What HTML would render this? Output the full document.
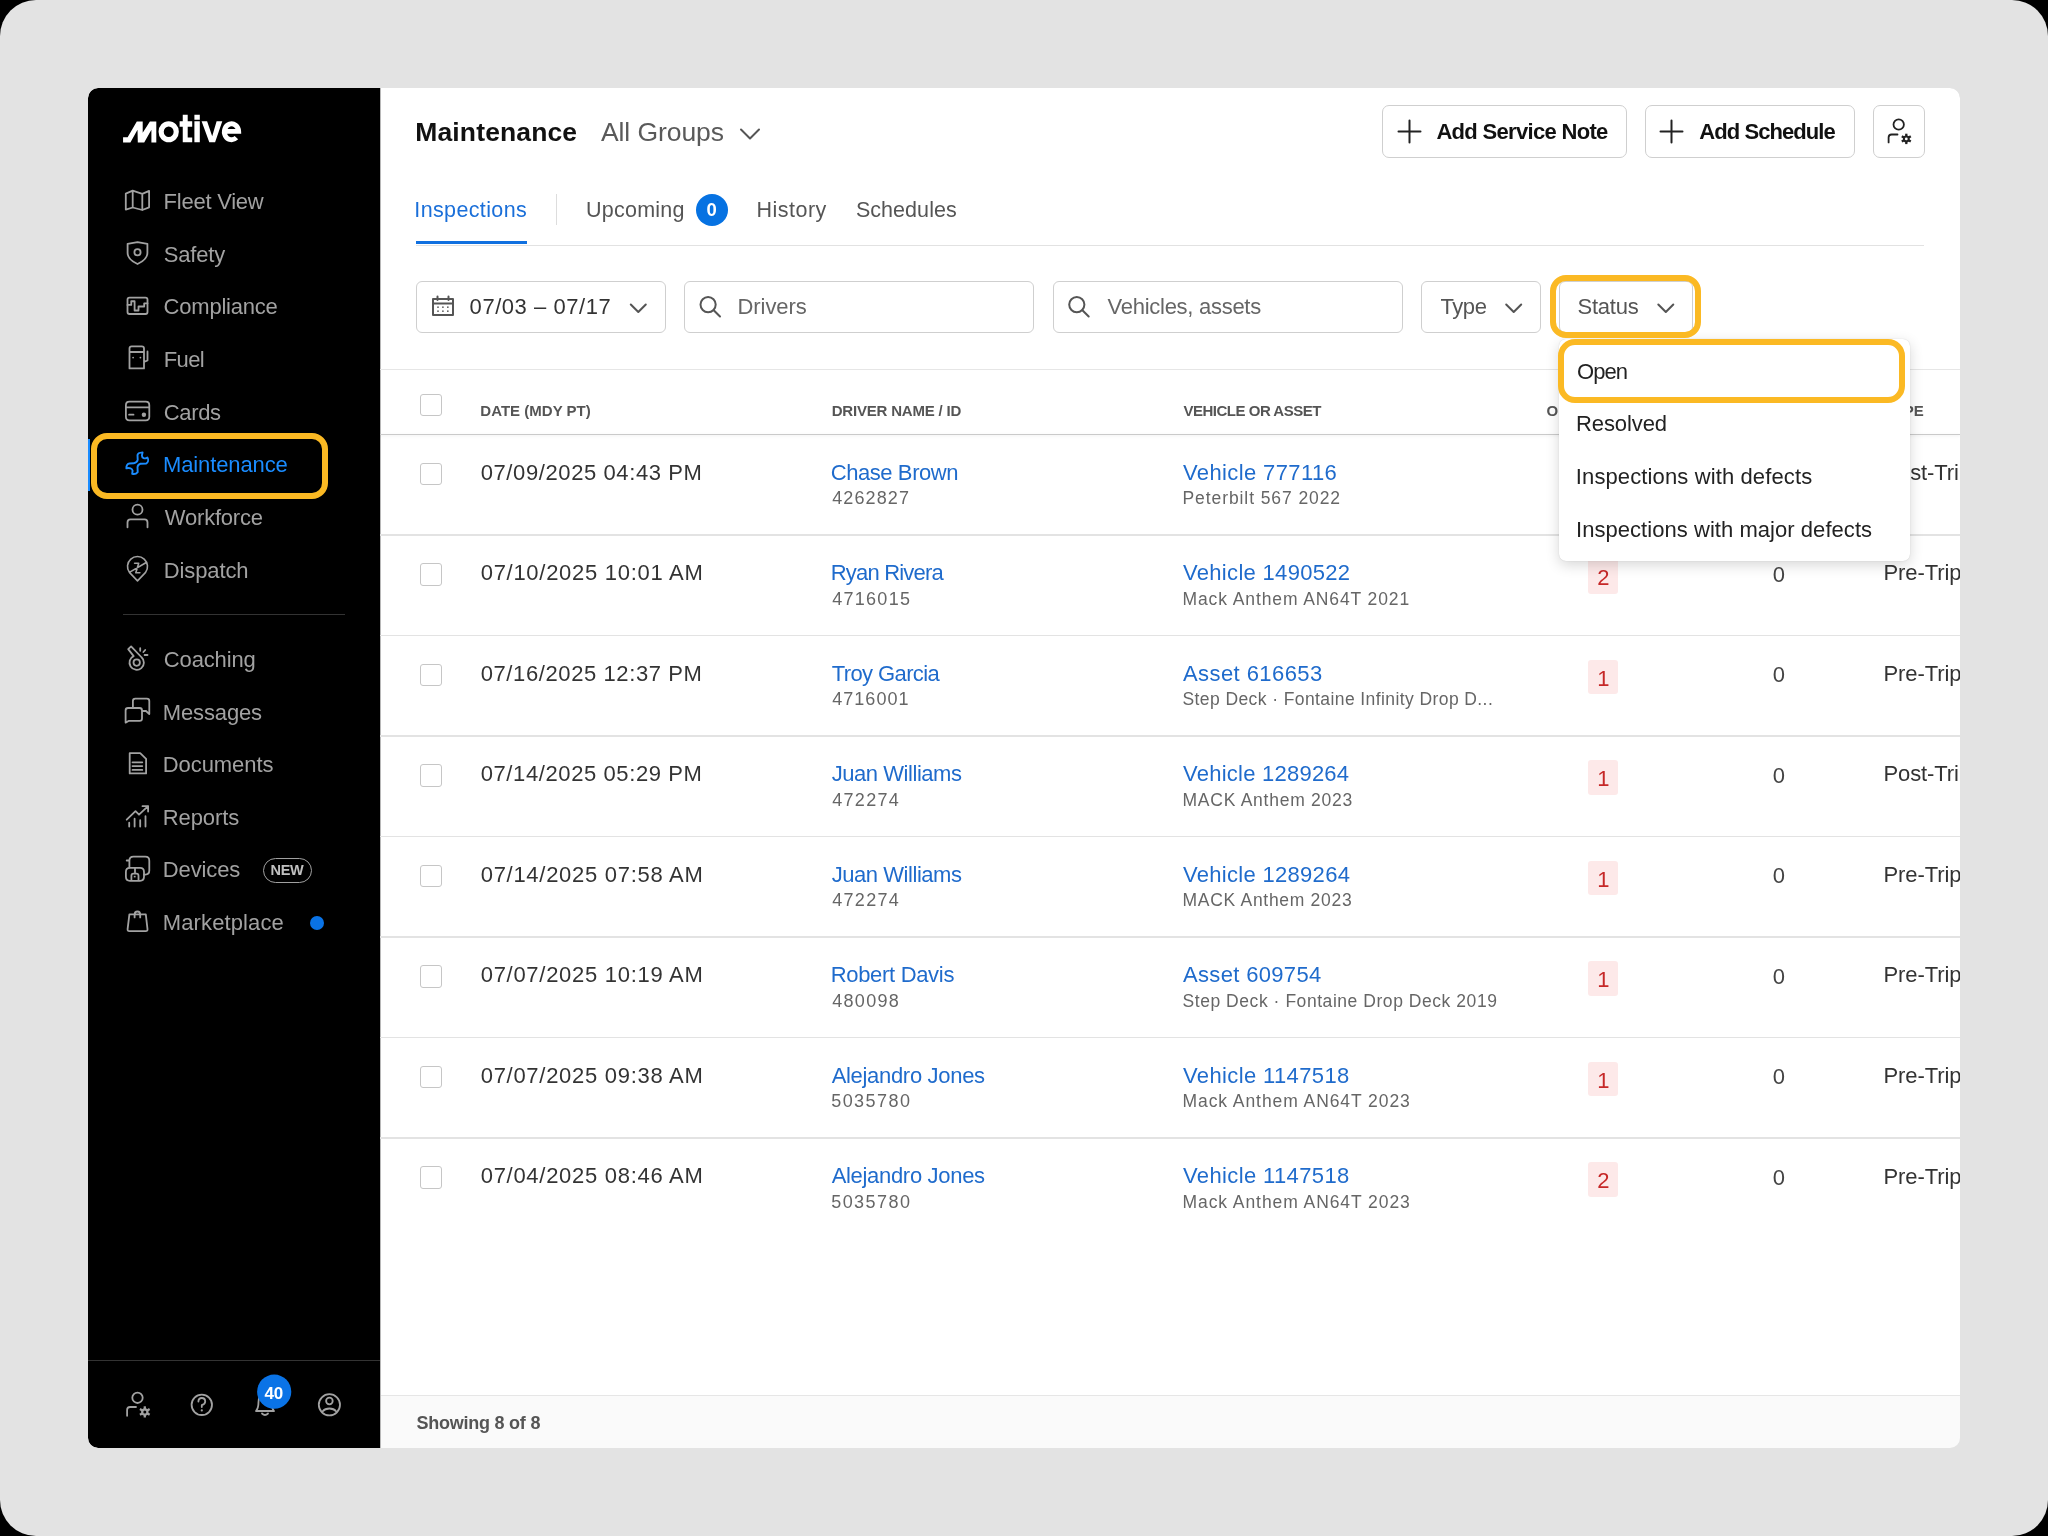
<!DOCTYPE html>
<html><head><meta charset="utf-8"><style>
html,body{margin:0;padding:0;}
body{width:2048px;height:1536px;position:relative;overflow:hidden;background:#000;font-family:'Liberation Sans',sans-serif;}
.bg{position:absolute;left:0;top:0;width:2048px;height:1536px;background:#e3e3e3;border-radius:36px;}
.t{position:absolute;white-space:nowrap;}
svg.ov{position:absolute;left:0;top:0;}
.clip{position:absolute;left:0;top:0;width:2048px;height:1536px;clip-path:inset(88px 88px 88px 88px round 10px);filter:blur(0.3px);}
</style></head><body>
<div class="bg"></div>
<div class="clip">
<div style="position:absolute;left:88px;top:88px;width:1872px;height:1360px;background:#fff;border-radius:10px;overflow:hidden"></div>
<div style="position:absolute;left:88px;top:88px;width:292px;height:1360px;background:#000;border-radius:10px 0 0 10px"></div>
<div style="position:absolute;left:380px;top:88px;width:1px;height:1360px;background:#b8b8b8"></div>
<div class="t" style="left:163.60px;top:188.00px;font-size:22px;line-height:28px;color:#a2a2a2;font-weight:400;letter-spacing:-0.243px;">Fleet View</div>
<div class="t" style="left:163.80px;top:241.00px;font-size:22px;line-height:28px;color:#a2a2a2;font-weight:400;letter-spacing:-0.2px;">Safety</div>
<div class="t" style="left:163.60px;top:293.00px;font-size:22px;line-height:28px;color:#a2a2a2;font-weight:400;letter-spacing:-0.221px;">Compliance</div>
<div class="t" style="left:163.80px;top:346.00px;font-size:22px;line-height:28px;color:#a2a2a2;font-weight:400;letter-spacing:-0.666px;">Fuel</div>
<div class="t" style="left:163.80px;top:399.00px;font-size:22px;line-height:28px;color:#a2a2a2;font-weight:400;letter-spacing:-0.35px;">Cards</div>
<div class="t" style="left:163.00px;top:451.00px;font-size:22px;line-height:28px;color:#1a8cff;font-weight:400;letter-spacing:-0.12px;">Maintenance</div>
<div class="t" style="left:164.80px;top:504.00px;font-size:22px;line-height:28px;color:#a2a2a2;font-weight:400;letter-spacing:-0.2px;">Workforce</div>
<div class="t" style="left:163.80px;top:557.00px;font-size:22px;line-height:28px;color:#a2a2a2;font-weight:400;letter-spacing:-0.114px;">Dispatch</div>
<div class="t" style="left:163.80px;top:646.00px;font-size:22px;line-height:28px;color:#a2a2a2;font-weight:400;letter-spacing:-0.142px;">Coaching</div>
<div class="t" style="left:162.80px;top:699.00px;font-size:22px;line-height:28px;color:#a2a2a2;font-weight:400;letter-spacing:-0.143px;">Messages</div>
<div class="t" style="left:162.80px;top:751.00px;font-size:22px;line-height:28px;color:#a2a2a2;font-weight:400;letter-spacing:-0.073px;">Documents</div>
<div class="t" style="left:162.80px;top:804.00px;font-size:22px;line-height:28px;color:#a2a2a2;font-weight:400;letter-spacing:-0.1px;">Reports</div>
<div class="t" style="left:162.80px;top:856.00px;font-size:22px;line-height:28px;color:#a2a2a2;font-weight:400;letter-spacing:-0.133px;">Devices</div>
<div class="t" style="left:162.80px;top:909.00px;font-size:22px;line-height:28px;color:#a2a2a2;font-weight:400;letter-spacing:0.12px;">Marketplace</div>
<div style="position:absolute;left:123px;top:614px;width:222px;height:1px;background:#333"></div>
<div style="position:absolute;left:88px;top:1360px;width:292px;height:1px;background:#333"></div>
<div style="position:absolute;left:88px;top:439px;width:2px;height:52px;background:#1a8cff"></div>
<div style="position:absolute;left:263px;top:857.5px;width:49px;height:25.5px;box-sizing:border-box;border:1.5px solid #a0a0a0;border-radius:13px"></div>
<div class="t" style="left:270.50px;top:861.00px;font-size:14.5px;line-height:18px;color:#c0c0c0;font-weight:700;letter-spacing:-0.3px;">NEW</div>
<div style="position:absolute;left:310px;top:916px;width:14px;height:14px;border-radius:50%;background:#0a73e6"></div>
<div class="t" style="left:415.30px;top:116.00px;font-size:26.5px;line-height:33px;color:#111;font-weight:700;letter-spacing:0.13px;">Maintenance</div>
<div class="t" style="left:600.90px;top:116.00px;font-size:26.5px;line-height:33px;color:#5a5a5a;font-weight:400;letter-spacing:-0.066px;">All Groups</div>
<div style="position:absolute;left:1382px;top:105px;width:245px;height:52.5px;box-sizing:border-box;border:1.5px solid #cfcfcf;border-radius:7px;background:#fff"></div>
<div style="position:absolute;left:1644.5px;top:105px;width:210px;height:52.5px;box-sizing:border-box;border:1.5px solid #cfcfcf;border-radius:7px;background:#fff"></div>
<div style="position:absolute;left:1872.5px;top:105px;width:52px;height:52.5px;box-sizing:border-box;border:1.5px solid #cfcfcf;border-radius:7px;background:#fff"></div>
<div class="t" style="left:1436.40px;top:118.00px;font-size:22px;line-height:28px;color:#111;font-weight:700;letter-spacing:-0.681px;">Add Service Note</div>
<div class="t" style="left:1699.30px;top:118.00px;font-size:22px;line-height:28px;color:#111;font-weight:700;letter-spacing:-0.939px;">Add Schedule</div>
<div class="t" style="left:414.30px;top:197.00px;font-size:21.5px;line-height:27px;color:#1a6fd9;font-weight:400;letter-spacing:0.37px;">Inspections</div>
<div style="position:absolute;left:556px;top:194px;width:1px;height:31px;background:#ddd"></div>
<div class="t" style="left:586.00px;top:197.00px;font-size:21.5px;line-height:27px;color:#555;font-weight:400;letter-spacing:0.242px;">Upcoming</div>
<div style="position:absolute;left:696px;top:194px;width:32px;height:32px;border-radius:50%;background:#0672e2"></div>
<div class="t" style="left:706.50px;top:198.00px;font-size:18.5px;line-height:23px;color:#fff;font-weight:700;letter-spacing:0px;">0</div>
<div class="t" style="left:756.60px;top:197.00px;font-size:21.5px;line-height:27px;color:#555;font-weight:400;letter-spacing:0.467px;">History</div>
<div class="t" style="left:855.90px;top:197.00px;font-size:21.5px;line-height:27px;color:#555;font-weight:400;letter-spacing:0.054px;">Schedules</div>
<div style="position:absolute;left:416px;top:244.5px;width:1508px;height:1.5px;background:#e2e2e2"></div>
<div style="position:absolute;left:415.5px;top:241px;width:111px;height:3px;background:#1070e0"></div>
<div style="position:absolute;left:416px;top:281px;width:249.5px;height:51.5px;box-sizing:border-box;border:1.5px solid #cfcfcf;border-radius:6px;background:#fff"></div>
<div style="position:absolute;left:683.5px;top:281px;width:350.5px;height:51.5px;box-sizing:border-box;border:1.5px solid #cfcfcf;border-radius:6px;background:#fff"></div>
<div style="position:absolute;left:1052.5px;top:281px;width:350.5px;height:51.5px;box-sizing:border-box;border:1.5px solid #cfcfcf;border-radius:6px;background:#fff"></div>
<div style="position:absolute;left:1421px;top:281px;width:119.5px;height:51.5px;box-sizing:border-box;border:1.5px solid #cfcfcf;border-radius:6px;background:#fff"></div>
<div style="position:absolute;left:1559px;top:281px;width:134px;height:51.5px;box-sizing:border-box;border:1.5px solid #cfcfcf;border-radius:6px;background:#fff"></div>
<div class="t" style="left:469.60px;top:293.00px;font-size:22px;line-height:28px;color:#333;font-weight:400;letter-spacing:0.549px;">07/03 – 07/17</div>
<div class="t" style="left:737.50px;top:293.00px;font-size:22px;line-height:28px;color:#666;font-weight:400;letter-spacing:-0.068px;">Drivers</div>
<div class="t" style="left:1107.60px;top:293.00px;font-size:22px;line-height:28px;color:#666;font-weight:400;letter-spacing:-0.278px;">Vehicles, assets</div>
<div class="t" style="left:1440.40px;top:293.00px;font-size:22px;line-height:28px;color:#555;font-weight:400;letter-spacing:-0.4px;">Type</div>
<div class="t" style="left:1577.50px;top:293.00px;font-size:22px;line-height:28px;color:#555;font-weight:400;letter-spacing:-0.24px;">Status</div>
<div style="position:absolute;left:380px;top:368.5px;width:1580px;height:1.5px;background:#e6e6e6"></div>
<div style="position:absolute;left:380px;top:434px;width:1580px;height:1.2px;background:#cacaca;box-shadow:0 1px 3px rgba(0,0,0,0.10)"></div>
<div style="position:absolute;left:419.5px;top:393.5px;width:22px;height:22.5px;box-sizing:border-box;border:1.5px solid #c6c6c6;border-radius:3px;background:#fff"></div>
<div class="t" style="left:480.30px;top:401.00px;font-size:15px;line-height:19px;color:#555;font-weight:700;letter-spacing:0.015px;">DATE (MDY PT)</div>
<div class="t" style="left:831.70px;top:401.00px;font-size:15px;line-height:19px;color:#555;font-weight:700;letter-spacing:-0.193px;">DRIVER NAME / ID</div>
<div class="t" style="left:1183.50px;top:401.00px;font-size:15px;line-height:19px;color:#555;font-weight:700;letter-spacing:-0.495px;">VEHICLE OR ASSET</div>
<div class="t" style="left:1546.50px;top:401.00px;font-size:15px;line-height:19px;color:#555;font-weight:700;letter-spacing:0px;">O</div>
<div class="t" style="left:1903.80px;top:401.00px;font-size:15px;line-height:19px;color:#555;font-weight:700;letter-spacing:0px;">PE</div>
<div style="position:absolute;left:380px;top:534.03px;width:1580px;height:1.5px;background:#e3e3e3"></div>
<div style="position:absolute;left:419.5px;top:462.5px;width:22px;height:22.5px;box-sizing:border-box;border:1.5px solid #c6c6c6;border-radius:3px;background:#fff"></div>
<div class="t" style="left:480.70px;top:459.00px;font-size:22px;line-height:28px;color:#333;font-weight:400;letter-spacing:0.601px;">07/09/2025 04:43 PM</div>
<div class="t" style="left:830.70px;top:459.00px;font-size:22px;line-height:28px;color:#1f6bcc;font-weight:400;letter-spacing:-0.42px;">Chase Brown</div>
<div class="t" style="left:832.20px;top:487.00px;font-size:18px;line-height:22px;color:#666;font-weight:400;letter-spacing:1.111px;">4262827</div>
<div class="t" style="left:1183.00px;top:459.00px;font-size:22px;line-height:28px;color:#1f6bcc;font-weight:400;letter-spacing:0.38px;">Vehicle 777116</div>
<div class="t" style="left:1182.50px;top:487.00px;font-size:17.5px;line-height:22px;color:#666;font-weight:400;letter-spacing:0.913px;">Peterbilt 567 2022</div>
<div style="position:absolute;left:1588.3px;top:458.50px;width:30px;height:34.5px;border-radius:3px;background:#fde9e9"></div>
<div class="t" style="left:1597.30px;top:463.00px;font-size:22px;line-height:28px;color:#c62828;font-weight:400;letter-spacing:0px;">1</div>
<div class="t" style="left:1772.80px;top:460.00px;font-size:22px;line-height:28px;color:#444;font-weight:400;letter-spacing:0px;">0</div>
<div class="t" style="left:1883.50px;top:459.00px;font-size:22px;line-height:28px;color:#333;font-weight:400;letter-spacing:-0.1px;">Post-Trip</div>
<div style="position:absolute;left:380px;top:634.56px;width:1580px;height:1.5px;background:#e3e3e3"></div>
<div style="position:absolute;left:419.5px;top:563.03px;width:22px;height:22.5px;box-sizing:border-box;border:1.5px solid #c6c6c6;border-radius:3px;background:#fff"></div>
<div class="t" style="left:480.70px;top:559.00px;font-size:22px;line-height:28px;color:#333;font-weight:400;letter-spacing:0.714px;">07/10/2025 10:01 AM</div>
<div class="t" style="left:830.70px;top:559.00px;font-size:22px;line-height:28px;color:#1f6bcc;font-weight:400;letter-spacing:-0.8px;">Ryan Rivera</div>
<div class="t" style="left:832.20px;top:588.00px;font-size:18px;line-height:22px;color:#666;font-weight:400;letter-spacing:1.278px;">4716015</div>
<div class="t" style="left:1183.00px;top:559.00px;font-size:22px;line-height:28px;color:#1f6bcc;font-weight:400;letter-spacing:0.312px;">Vehicle 1490522</div>
<div class="t" style="left:1182.50px;top:588.00px;font-size:17.5px;line-height:22px;color:#666;font-weight:400;letter-spacing:0.898px;">Mack Anthem AN64T 2021</div>
<div style="position:absolute;left:1588.3px;top:559.03px;width:30px;height:34.5px;border-radius:3px;background:#fde9e9"></div>
<div class="t" style="left:1597.30px;top:564.00px;font-size:22px;line-height:28px;color:#c62828;font-weight:400;letter-spacing:0px;">2</div>
<div class="t" style="left:1772.80px;top:561.00px;font-size:22px;line-height:28px;color:#444;font-weight:400;letter-spacing:0px;">0</div>
<div class="t" style="left:1883.50px;top:559.00px;font-size:22px;line-height:28px;color:#333;font-weight:400;letter-spacing:-0.1px;">Pre-Trip</div>
<div style="position:absolute;left:380px;top:735.09px;width:1580px;height:1.5px;background:#e3e3e3"></div>
<div style="position:absolute;left:419.5px;top:663.56px;width:22px;height:22.5px;box-sizing:border-box;border:1.5px solid #c6c6c6;border-radius:3px;background:#fff"></div>
<div class="t" style="left:480.70px;top:660.00px;font-size:22px;line-height:28px;color:#333;font-weight:400;letter-spacing:0.601px;">07/16/2025 12:37 PM</div>
<div class="t" style="left:831.70px;top:660.00px;font-size:22px;line-height:28px;color:#1f6bcc;font-weight:400;letter-spacing:-0.6px;">Troy Garcia</div>
<div class="t" style="left:832.20px;top:688.00px;font-size:18px;line-height:22px;color:#666;font-weight:400;letter-spacing:1.045px;">4716001</div>
<div class="t" style="left:1183.00px;top:660.00px;font-size:22px;line-height:28px;color:#1f6bcc;font-weight:400;letter-spacing:0.425px;">Asset 616653</div>
<div class="t" style="left:1182.50px;top:688.00px;font-size:17.5px;line-height:22px;color:#666;font-weight:400;letter-spacing:0.409px;">Step Deck · Fontaine Infinity Drop D...</div>
<div style="position:absolute;left:1588.3px;top:659.56px;width:30px;height:34.5px;border-radius:3px;background:#fde9e9"></div>
<div class="t" style="left:1597.30px;top:665.00px;font-size:22px;line-height:28px;color:#c62828;font-weight:400;letter-spacing:0px;">1</div>
<div class="t" style="left:1772.80px;top:661.00px;font-size:22px;line-height:28px;color:#444;font-weight:400;letter-spacing:0px;">0</div>
<div class="t" style="left:1883.50px;top:660.00px;font-size:22px;line-height:28px;color:#333;font-weight:400;letter-spacing:-0.1px;">Pre-Trip</div>
<div style="position:absolute;left:380px;top:835.62px;width:1580px;height:1.5px;background:#e3e3e3"></div>
<div style="position:absolute;left:419.5px;top:764.09px;width:22px;height:22.5px;box-sizing:border-box;border:1.5px solid #c6c6c6;border-radius:3px;background:#fff"></div>
<div class="t" style="left:480.70px;top:760.00px;font-size:22px;line-height:28px;color:#333;font-weight:400;letter-spacing:0.601px;">07/14/2025 05:29 PM</div>
<div class="t" style="left:831.70px;top:760.00px;font-size:22px;line-height:28px;color:#1f6bcc;font-weight:400;letter-spacing:-0.449px;">Juan Williams</div>
<div class="t" style="left:832.20px;top:789.00px;font-size:18px;line-height:22px;color:#666;font-weight:400;letter-spacing:1.32px;">472274</div>
<div class="t" style="left:1183.00px;top:760.00px;font-size:22px;line-height:28px;color:#1f6bcc;font-weight:400;letter-spacing:0.241px;">Vehicle 1289264</div>
<div class="t" style="left:1182.50px;top:789.00px;font-size:17.5px;line-height:22px;color:#666;font-weight:400;letter-spacing:0.747px;">MACK Anthem 2023</div>
<div style="position:absolute;left:1588.3px;top:760.09px;width:30px;height:34.5px;border-radius:3px;background:#fde9e9"></div>
<div class="t" style="left:1597.30px;top:765.00px;font-size:22px;line-height:28px;color:#c62828;font-weight:400;letter-spacing:0px;">1</div>
<div class="t" style="left:1772.80px;top:762.00px;font-size:22px;line-height:28px;color:#444;font-weight:400;letter-spacing:0px;">0</div>
<div class="t" style="left:1883.50px;top:760.00px;font-size:22px;line-height:28px;color:#333;font-weight:400;letter-spacing:-0.1px;">Post-Trip</div>
<div style="position:absolute;left:380px;top:936.15px;width:1580px;height:1.5px;background:#e3e3e3"></div>
<div style="position:absolute;left:419.5px;top:864.62px;width:22px;height:22.5px;box-sizing:border-box;border:1.5px solid #c6c6c6;border-radius:3px;background:#fff"></div>
<div class="t" style="left:480.70px;top:861.00px;font-size:22px;line-height:28px;color:#333;font-weight:400;letter-spacing:0.714px;">07/14/2025 07:58 AM</div>
<div class="t" style="left:831.70px;top:861.00px;font-size:22px;line-height:28px;color:#1f6bcc;font-weight:400;letter-spacing:-0.449px;">Juan Williams</div>
<div class="t" style="left:832.20px;top:889.00px;font-size:18px;line-height:22px;color:#666;font-weight:400;letter-spacing:1.32px;">472274</div>
<div class="t" style="left:1183.00px;top:861.00px;font-size:22px;line-height:28px;color:#1f6bcc;font-weight:400;letter-spacing:0.302px;">Vehicle 1289264</div>
<div class="t" style="left:1182.50px;top:889.00px;font-size:17.5px;line-height:22px;color:#666;font-weight:400;letter-spacing:0.708px;">MACK Anthem 2023</div>
<div style="position:absolute;left:1588.3px;top:860.62px;width:30px;height:34.5px;border-radius:3px;background:#fde9e9"></div>
<div class="t" style="left:1597.30px;top:866.00px;font-size:22px;line-height:28px;color:#c62828;font-weight:400;letter-spacing:0px;">1</div>
<div class="t" style="left:1772.80px;top:862.00px;font-size:22px;line-height:28px;color:#444;font-weight:400;letter-spacing:0px;">0</div>
<div class="t" style="left:1883.50px;top:861.00px;font-size:22px;line-height:28px;color:#333;font-weight:400;letter-spacing:-0.1px;">Pre-Trip</div>
<div style="position:absolute;left:380px;top:1036.68px;width:1580px;height:1.5px;background:#e3e3e3"></div>
<div style="position:absolute;left:419.5px;top:965.15px;width:22px;height:22.5px;box-sizing:border-box;border:1.5px solid #c6c6c6;border-radius:3px;background:#fff"></div>
<div class="t" style="left:480.70px;top:961.00px;font-size:22px;line-height:28px;color:#333;font-weight:400;letter-spacing:0.714px;">07/07/2025 10:19 AM</div>
<div class="t" style="left:830.70px;top:961.00px;font-size:22px;line-height:28px;color:#1f6bcc;font-weight:400;letter-spacing:-0.315px;">Robert Davis</div>
<div class="t" style="left:832.20px;top:990.00px;font-size:18px;line-height:22px;color:#666;font-weight:400;letter-spacing:1.32px;">480098</div>
<div class="t" style="left:1183.00px;top:961.00px;font-size:22px;line-height:28px;color:#1f6bcc;font-weight:400;letter-spacing:0.337px;">Asset 609754</div>
<div class="t" style="left:1182.50px;top:990.00px;font-size:17.5px;line-height:22px;color:#666;font-weight:400;letter-spacing:0.55px;">Step Deck · Fontaine Drop Deck 2019</div>
<div style="position:absolute;left:1588.3px;top:961.15px;width:30px;height:34.5px;border-radius:3px;background:#fde9e9"></div>
<div class="t" style="left:1597.30px;top:966.00px;font-size:22px;line-height:28px;color:#c62828;font-weight:400;letter-spacing:0px;">1</div>
<div class="t" style="left:1772.80px;top:963.00px;font-size:22px;line-height:28px;color:#444;font-weight:400;letter-spacing:0px;">0</div>
<div class="t" style="left:1883.50px;top:961.00px;font-size:22px;line-height:28px;color:#333;font-weight:400;letter-spacing:-0.1px;">Pre-Trip</div>
<div style="position:absolute;left:380px;top:1137.21px;width:1580px;height:1.5px;background:#e3e3e3"></div>
<div style="position:absolute;left:419.5px;top:1065.68px;width:22px;height:22.5px;box-sizing:border-box;border:1.5px solid #c6c6c6;border-radius:3px;background:#fff"></div>
<div class="t" style="left:480.70px;top:1062.00px;font-size:22px;line-height:28px;color:#333;font-weight:400;letter-spacing:0.714px;">07/07/2025 09:38 AM</div>
<div class="t" style="left:831.70px;top:1062.00px;font-size:22px;line-height:28px;color:#1f6bcc;font-weight:400;letter-spacing:-0.315px;">Alejandro Jones</div>
<div class="t" style="left:831.20px;top:1090.00px;font-size:18px;line-height:22px;color:#666;font-weight:400;letter-spacing:1.445px;">5035780</div>
<div class="t" style="left:1183.00px;top:1062.00px;font-size:22px;line-height:28px;color:#1f6bcc;font-weight:400;letter-spacing:0.373px;">Vehicle 1147518</div>
<div class="t" style="left:1182.50px;top:1090.00px;font-size:17.5px;line-height:22px;color:#666;font-weight:400;letter-spacing:0.927px;">Mack Anthem AN64T 2023</div>
<div style="position:absolute;left:1588.3px;top:1061.68px;width:30px;height:34.5px;border-radius:3px;background:#fde9e9"></div>
<div class="t" style="left:1597.30px;top:1067.00px;font-size:22px;line-height:28px;color:#c62828;font-weight:400;letter-spacing:0px;">1</div>
<div class="t" style="left:1772.80px;top:1063.00px;font-size:22px;line-height:28px;color:#444;font-weight:400;letter-spacing:0px;">0</div>
<div class="t" style="left:1883.50px;top:1062.00px;font-size:22px;line-height:28px;color:#333;font-weight:400;letter-spacing:-0.1px;">Pre-Trip</div>
<div style="position:absolute;left:419.5px;top:1166.21px;width:22px;height:22.5px;box-sizing:border-box;border:1.5px solid #c6c6c6;border-radius:3px;background:#fff"></div>
<div class="t" style="left:480.70px;top:1162.00px;font-size:22px;line-height:28px;color:#333;font-weight:400;letter-spacing:0.714px;">07/04/2025 08:46 AM</div>
<div class="t" style="left:831.70px;top:1162.00px;font-size:22px;line-height:28px;color:#1f6bcc;font-weight:400;letter-spacing:-0.315px;">Alejandro Jones</div>
<div class="t" style="left:831.20px;top:1191.00px;font-size:18px;line-height:22px;color:#666;font-weight:400;letter-spacing:1.445px;">5035780</div>
<div class="t" style="left:1183.00px;top:1162.00px;font-size:22px;line-height:28px;color:#1f6bcc;font-weight:400;letter-spacing:0.373px;">Vehicle 1147518</div>
<div class="t" style="left:1182.50px;top:1191.00px;font-size:17.5px;line-height:22px;color:#666;font-weight:400;letter-spacing:0.927px;">Mack Anthem AN64T 2023</div>
<div style="position:absolute;left:1588.3px;top:1162.21px;width:30px;height:34.5px;border-radius:3px;background:#fde9e9"></div>
<div class="t" style="left:1597.30px;top:1167.00px;font-size:22px;line-height:28px;color:#c62828;font-weight:400;letter-spacing:0px;">2</div>
<div class="t" style="left:1772.80px;top:1164.00px;font-size:22px;line-height:28px;color:#444;font-weight:400;letter-spacing:0px;">0</div>
<div class="t" style="left:1883.50px;top:1163.00px;font-size:22px;line-height:28px;color:#333;font-weight:400;letter-spacing:-0.1px;">Pre-Trip</div>
<div style="position:absolute;left:381px;top:1395px;width:1579px;height:53px;background:#fafafa"></div>
<div style="position:absolute;left:381px;top:1394.5px;width:1579px;height:1.5px;background:#e6e6e6"></div>
<div class="t" style="left:416.40px;top:1412.00px;font-size:18px;line-height:22px;color:#555;font-weight:700;letter-spacing:-0.23px;">Showing 8 of 8</div>
<div style="position:absolute;left:1559px;top:338.5px;width:351px;height:222.5px;border-radius:7px;background:#fff;box-shadow:0 4px 14px rgba(0,0,0,0.16),0 0 1px rgba(0,0,0,0.2)"></div>
<div class="t" style="left:1577.00px;top:358.00px;font-size:22px;line-height:28px;color:#222;font-weight:400;letter-spacing:-0.933px;">Open</div>
<div class="t" style="left:1576.00px;top:410.00px;font-size:22px;line-height:28px;color:#222;font-weight:400;letter-spacing:-0.1px;">Resolved</div>
<div class="t" style="left:1575.80px;top:463.00px;font-size:22px;line-height:28px;color:#222;font-weight:400;letter-spacing:0.121px;">Inspections with defects</div>
<div class="t" style="left:1576.00px;top:516.00px;font-size:22px;line-height:28px;color:#222;font-weight:400;letter-spacing:0.047px;">Inspections with major defects</div>
<div style="position:absolute;left:90.5px;top:433px;width:237.5px;height:65.5px;box-sizing:border-box;border:6px solid #fbb923;border-radius:16px"></div>
<div style="position:absolute;left:1549.5px;top:275.3px;width:151px;height:63px;box-sizing:border-box;border:6px solid #fbb923;border-radius:16px"></div>
<div style="position:absolute;left:1558px;top:339.3px;width:347px;height:64px;box-sizing:border-box;border:6px solid #fbb923;border-radius:17px"></div>
<svg class="ov" width="2048" height="1536" viewBox="0 0 2048 1536">
<path d="M123.07 142.40 L123.07 137.20 L127.65 137.20 L136.80 121.40 L142.70 121.40 L142.70 132.80 L149.90 121.40 L156.30 121.40 L156.30 142.40 L151.40 142.40 L151.40 129.80 L144.20 142.40 L137.80 142.40 L137.50 129.80 L130.40 142.40 Z" fill="#fff"/>
<path d="M182.75 114.7 H187.7 V121.2 H192.2 V126.8 H187.7 V137.4 H192.2 V142.3 H182.75 V126.8 H179.6 V121.2 H182.75 Z" fill="#fff"/>
<path d="M194.4 121.2 H199.8 V142.3 H194.4 Z M194.4 114.7 H199.8 V119.7 H194.4 Z" fill="#fff"/>
<path d="M201.6 121.2 H207.1 L212.2 136.2 L216.6 121.2 H222.3 L215.1 142.3 H209.3 Z" fill="#fff"/>
<ellipse cx="168.7" cy="131.75" rx="7.55" ry="7.95" fill="none" stroke="#fff" stroke-width="5.2"/>
<path d="M224.4 131.35 H238.65 A7.15 7.95 0 1 0 236.4 137.6" fill="none" stroke="#fff" stroke-width="4.9"/>
<path d="M741 129.5 L750 138.5 L759 129.5" fill="none" stroke="#555" stroke-width="2" stroke-linecap="round" stroke-linejoin="round" />
<path d="M1409.5 120.5 V142.5 M1398.5 131.5 H1420.5" fill="none" stroke="#222" stroke-width="2" stroke-linecap="round" stroke-linejoin="round" stroke-linecap="butt"/>
<path d="M1671.5 120.5 V142.5 M1660.5 131.5 H1682.5" fill="none" stroke="#222" stroke-width="2" stroke-linecap="round" stroke-linejoin="round" />
<path d="M630.8 304.5 L638.3 312 L645.8 304.5" fill="none" stroke="#555" stroke-width="2" stroke-linecap="round" stroke-linejoin="round" />
<path d="M1506.2 304.5 L1513.7 312 L1521.2 304.5" fill="none" stroke="#555" stroke-width="2" stroke-linecap="round" stroke-linejoin="round" />
<path d="M1658.3 304.5 L1665.8 312 L1673.3 304.5" fill="none" stroke="#555" stroke-width="2" stroke-linecap="round" stroke-linejoin="round" />
<circle cx="708.1" cy="304.6" r="7.6" fill="none" stroke="#555" stroke-width="2"/>
<path d="M713.7 310.2 L720.0 316.5" fill="none" stroke="#555" stroke-width="2" stroke-linecap="round" stroke-linejoin="round" />
<circle cx="1076.8" cy="304.6" r="7.6" fill="none" stroke="#555" stroke-width="2"/>
<path d="M1082.4 310.2 L1088.7 316.5" fill="none" stroke="#555" stroke-width="2" stroke-linecap="round" stroke-linejoin="round" />
<path d="M433 299 H453 V315 H433 Z M433 303.5 H453 M437.5 296.5 V300 M448.5 296.5 V300" fill="none" stroke="#555" stroke-width="2" stroke-linecap="round" stroke-linejoin="round" stroke-linecap="butt" stroke-linejoin="miter"/>
<rect x="437.2" y="306.4" width="1.6" height="1.6" fill="#666"/>
<rect x="442.09999999999997" y="306.4" width="1.6" height="1.6" fill="#666"/>
<rect x="447.0" y="306.4" width="1.6" height="1.6" fill="#666"/>
<rect x="437.2" y="310.4" width="1.6" height="1.6" fill="#666"/>
<rect x="442.09999999999997" y="310.4" width="1.6" height="1.6" fill="#666"/>
<rect x="447.0" y="310.4" width="1.6" height="1.6" fill="#666"/>
<path d="M125.8 193.6 L132.7 190.7 L142.3 193.8 L149.1 190.9 L149.1 207.3 L142.3 210 L132.7 207.5 L125.8 209.6 Z M132.7 190.7 V207.5 M142.3 193.8 V210" fill="none" stroke="#a2a2a2" stroke-width="1.8" stroke-linecap="round" stroke-linejoin="round" />
<path d="M137.5 242.2 L127.6 243.8 V253 C127.6 258 132 261.5 137.5 264 C143 261.5 147.4 258 147.4 253 V243.8 Z" fill="none" stroke="#a2a2a2" stroke-width="1.8" stroke-linecap="round" stroke-linejoin="round" />
<circle cx="137.5" cy="252.3" r="3.1" fill="none" stroke="#a2a2a2" stroke-width="1.8"/>
<path d="M129.5 297.6 H145.5 Q147.5 297.6 147.5 299.6 V312 Q147.5 314 145.5 314 H129.5 Q127.5 314 127.5 312 V299.6 Q127.5 297.6 129.5 297.6 Z" fill="none" stroke="#a2a2a2" stroke-width="1.8" stroke-linecap="round" stroke-linejoin="round" />
<path d="M127.5 304.9 H131.25 V301.25 H134.6 V310.5 H138.5 V306.5 H144.2 V303.3 H147.5" fill="none" stroke="#a2a2a2" stroke-width="1.8" stroke-linecap="round" stroke-linejoin="round" stroke-linejoin="miter"/>
<path d="M129.5 368.4 V348.6 Q129.5 346.4 131.7 346.4 H141.8 Q144 346.4 144 348.6 V368.4 Z M129.5 352 H144 M144 361.8 L147.5 360.5 V351.5" fill="none" stroke="#a2a2a2" stroke-width="1.8" stroke-linecap="round" stroke-linejoin="round" />
<circle cx="133.1" cy="357.6" r="0.9" fill="#a2a2a2"/><circle cx="140.4" cy="357.6" r="0.9" fill="#a2a2a2"/>
<path d="M129.4 401.7 H145.8 Q149.3 401.7 149.3 405.2 V416.8 Q149.3 420.3 145.8 420.3 H129.4 Q125.9 420.3 125.9 416.8 V405.2 Q125.9 401.7 129.4 401.7 Z M125.9 407.3 H149.3 M129.1 414.7 H133.5" fill="none" stroke="#a2a2a2" stroke-width="1.8" stroke-linecap="round" stroke-linejoin="round" />
<circle cx="143.9" cy="414.8" r="2.2" fill="#a2a2a2"/>
<path d="M137.5 455.1 C137.6 453.8 139.8 452.6 142.6 452.4 L141.9 455.6 C141.9 457.8 144.5 459.4 147.4 457.6 C148.8 459.8 148 462.4 146.3 463.5 L140.6 463.7 C138.6 464.5 137.5 465.8 137.5 467.3 L137.7 472.1 C136.6 473.5 134.6 474.3 132.2 473.8 L132.6 470.6 C132.2 468.5 129.6 467.4 126.4 468.4 C126.2 465.6 127.4 463.6 129.5 463.5 L133.7 463.3 C136.2 462.6 137.6 461.2 137.7 459.7 Z" fill="none" stroke="#1a8cff" stroke-width="1.9" stroke-linecap="round" stroke-linejoin="round" />
<circle cx="137.5" cy="509.7" r="5" fill="none" stroke="#a2a2a2" stroke-width="1.8"/>
<path d="M127.5 527.3 V522.4 Q127.5 519.4 130.5 519.4 H144.5 Q147.5 519.4 147.5 522.4 V527.3" fill="none" stroke="#a2a2a2" stroke-width="1.8" stroke-linecap="round" stroke-linejoin="round" />
<path d="M129.4 572.4 A10 10 0 1 1 145.6 572.4 L137.5 580.9 Z M129.4 572.4 L145.8 562.7 M134.6 563.3 H138.7 L135.8 572.7 H139.9" fill="none" stroke="#a2a2a2" stroke-width="1.6" stroke-linecap="round" stroke-linejoin="round" />
<path d="M133.66 656.07 L128.2 649.1 L131.1 646.4 L141.5 657.25 A7.2 7.2 0 1 1 133.66 656.07 Z" fill="none" stroke="#a2a2a2" stroke-width="1.8" stroke-linecap="round" stroke-linejoin="round" />
<circle cx="136.7" cy="662.6" r="3.2" fill="none" stroke="#a2a2a2" stroke-width="1.8"/>
<path d="M140.2 648.2 V650.8 M145.2 650 L143.4 652 M144.6 655 H147.5" fill="none" stroke="#a2a2a2" stroke-width="1.8" stroke-linecap="round" stroke-linejoin="round" />
<path d="M132.9 707.5 V701 Q132.9 698.6 135.3 698.6 H146.9 Q149.3 698.6 149.3 701 V714.1 L146 711 H142 M128 708 H139.6 Q142 708 142 710.4 V718.4 Q142 720.8 139.6 720.8 H129 L125.6 722.6 V710.4 Q125.6 708 128 708 Z" fill="none" stroke="#a2a2a2" stroke-width="1.8" stroke-linecap="round" stroke-linejoin="round" />
<path d="M129.7 753.2 H140.2 L146.1 758.8 V773.4 H129.7 Z M132.5 762.3 H142.3 M132.5 766.1 H142.3 M132.5 769.9 H142.3" fill="none" stroke="#a2a2a2" stroke-width="1.8" stroke-linecap="round" stroke-linejoin="round" stroke-linejoin="miter"/>
<path d="M126.7 819.7 L135.5 811.2 L139 814.7 L148.1 806.2 M142.5 806.2 H148.1 V811.5 M129.2 822.7 V826.5 M134.6 818.7 V826.5 M140.2 820.2 V826.5 M145.5 816.2 V826.5" fill="none" stroke="#a2a2a2" stroke-width="1.8" stroke-linecap="round" stroke-linejoin="round" />
<path d="M129.4 867.5 V860.7 Q129.4 856.7 133.4 856.7 H145.3 Q149.3 856.7 149.3 860.7 V870.6 Q149.3 874.6 145.3 874.6 H144 M126.7 860.5 H129.4" fill="none" stroke="#a2a2a2" stroke-width="1.8" stroke-linecap="round" stroke-linejoin="round" />
<path d="M129.9 867.9 H140 Q144 867.9 144 871.9 V876.8 Q144 880.8 140 880.8 H129.9 Q125.9 880.8 125.9 876.8 V871.9 Q125.9 867.9 129.9 867.9 Z M135 867.9 V873.7 M131.4 880.8 V875.7 Q131.4 873.7 133.4 873.7 H136.5 Q138.5 873.7 138.5 875.7 V880.8" fill="none" stroke="#a2a2a2" stroke-width="1.8" stroke-linecap="round" stroke-linejoin="round" />
<rect x="133.8" y="875.8" width="1.8" height="1.6" fill="#a2a2a2"/>
<path d="M129.4 914.4 H145.8 L147.5 929.1 Q147.7 931.1 145.7 931.1 H129.4 Q127.4 931.1 127.6 929.1 Z M134.6 917.4 V914.4 Q134.6 911.5 137.4 911.5 Q140.2 911.5 140.2 914.4 V917.4" fill="none" stroke="#a2a2a2" stroke-width="1.8" stroke-linecap="round" stroke-linejoin="round" />
<circle cx="137.5" cy="1397.8" r="5.2" fill="none" stroke="#a2a2a2" stroke-width="1.8"/>
<path d="M127.1 1415.8 V1410 Q127.1 1407 130.1 1407 H136" fill="none" stroke="#a2a2a2" stroke-width="1.8" stroke-linecap="round" stroke-linejoin="round" />
<g transform="translate(144.8,1411.9)" fill="#a2a2a2"><rect x="-1.15" y="-5.6" width="2.3" height="5.6" transform="rotate(0)"/><rect x="-1.15" y="-5.6" width="2.3" height="5.6" transform="rotate(60)"/><rect x="-1.15" y="-5.6" width="2.3" height="5.6" transform="rotate(120)"/><rect x="-1.15" y="-5.6" width="2.3" height="5.6" transform="rotate(180)"/><rect x="-1.15" y="-5.6" width="2.3" height="5.6" transform="rotate(240)"/><rect x="-1.15" y="-5.6" width="2.3" height="5.6" transform="rotate(300)"/><circle r="3.7"/><circle r="1.5" fill="#000"/></g>
<circle cx="201.8" cy="1404.8" r="10.2" fill="none" stroke="#a2a2a2" stroke-width="1.8"/>
<path d="M198.4 1401.6 Q198.4 1398 201.8 1398 Q205.2 1398 205.2 1401.4 Q205.2 1403.8 201.8 1405.2 V1407" fill="none" stroke="#a2a2a2" stroke-width="1.8" stroke-linecap="round" stroke-linejoin="round" />
<circle cx="201.8" cy="1410.4" r="1.1" fill="#a2a2a2"/>
<path d="M256 1411 Q258.5 1408 258.5 1402 Q258.5 1394 265 1394 Q271.5 1394 271.5 1402 Q271.5 1408 274 1411 Z M262 1413.5 Q265 1416.5 268 1413.5" fill="none" stroke="#a2a2a2" stroke-width="1.8" stroke-linecap="round" stroke-linejoin="round" />
<circle cx="329.4" cy="1404.8" r="10.6" fill="none" stroke="#a2a2a2" stroke-width="1.8"/>
<circle cx="329.4" cy="1401" r="3.3" fill="none" stroke="#a2a2a2" stroke-width="1.8"/>
<path d="M322.5 1411.5 Q325 1408.5 329.4 1408.5 Q333.8 1408.5 336.3 1411.5" fill="none" stroke="#a2a2a2" stroke-width="1.8" stroke-linecap="round" stroke-linejoin="round" />
<circle cx="274.2" cy="1391.7" r="17.1" fill="#0a73e6"/>
<text x="264.6" y="1399" font-family="Liberation Sans" font-weight="700" font-size="17" letter-spacing="-0.3" fill="#fff">40</text>
<circle cx="1898.7" cy="124.5" r="5.2" fill="none" stroke="#222" stroke-width="1.8"/>
<path d="M1888.6 142.4 V137.5 Q1888.6 134.5 1891.6 134.5 H1897.5" fill="none" stroke="#222" stroke-width="1.8" stroke-linecap="round" stroke-linejoin="round" />
<g transform="translate(1906.3,138.9)" fill="#222"><rect x="-1.15" y="-5.2" width="2.3" height="5.2" transform="rotate(0)"/><rect x="-1.15" y="-5.2" width="2.3" height="5.2" transform="rotate(60)"/><rect x="-1.15" y="-5.2" width="2.3" height="5.2" transform="rotate(120)"/><rect x="-1.15" y="-5.2" width="2.3" height="5.2" transform="rotate(180)"/><rect x="-1.15" y="-5.2" width="2.3" height="5.2" transform="rotate(240)"/><rect x="-1.15" y="-5.2" width="2.3" height="5.2" transform="rotate(300)"/><circle r="3.4"/><circle r="1.4" fill="#fff"/></g>
</svg>
</div>
</body></html>
